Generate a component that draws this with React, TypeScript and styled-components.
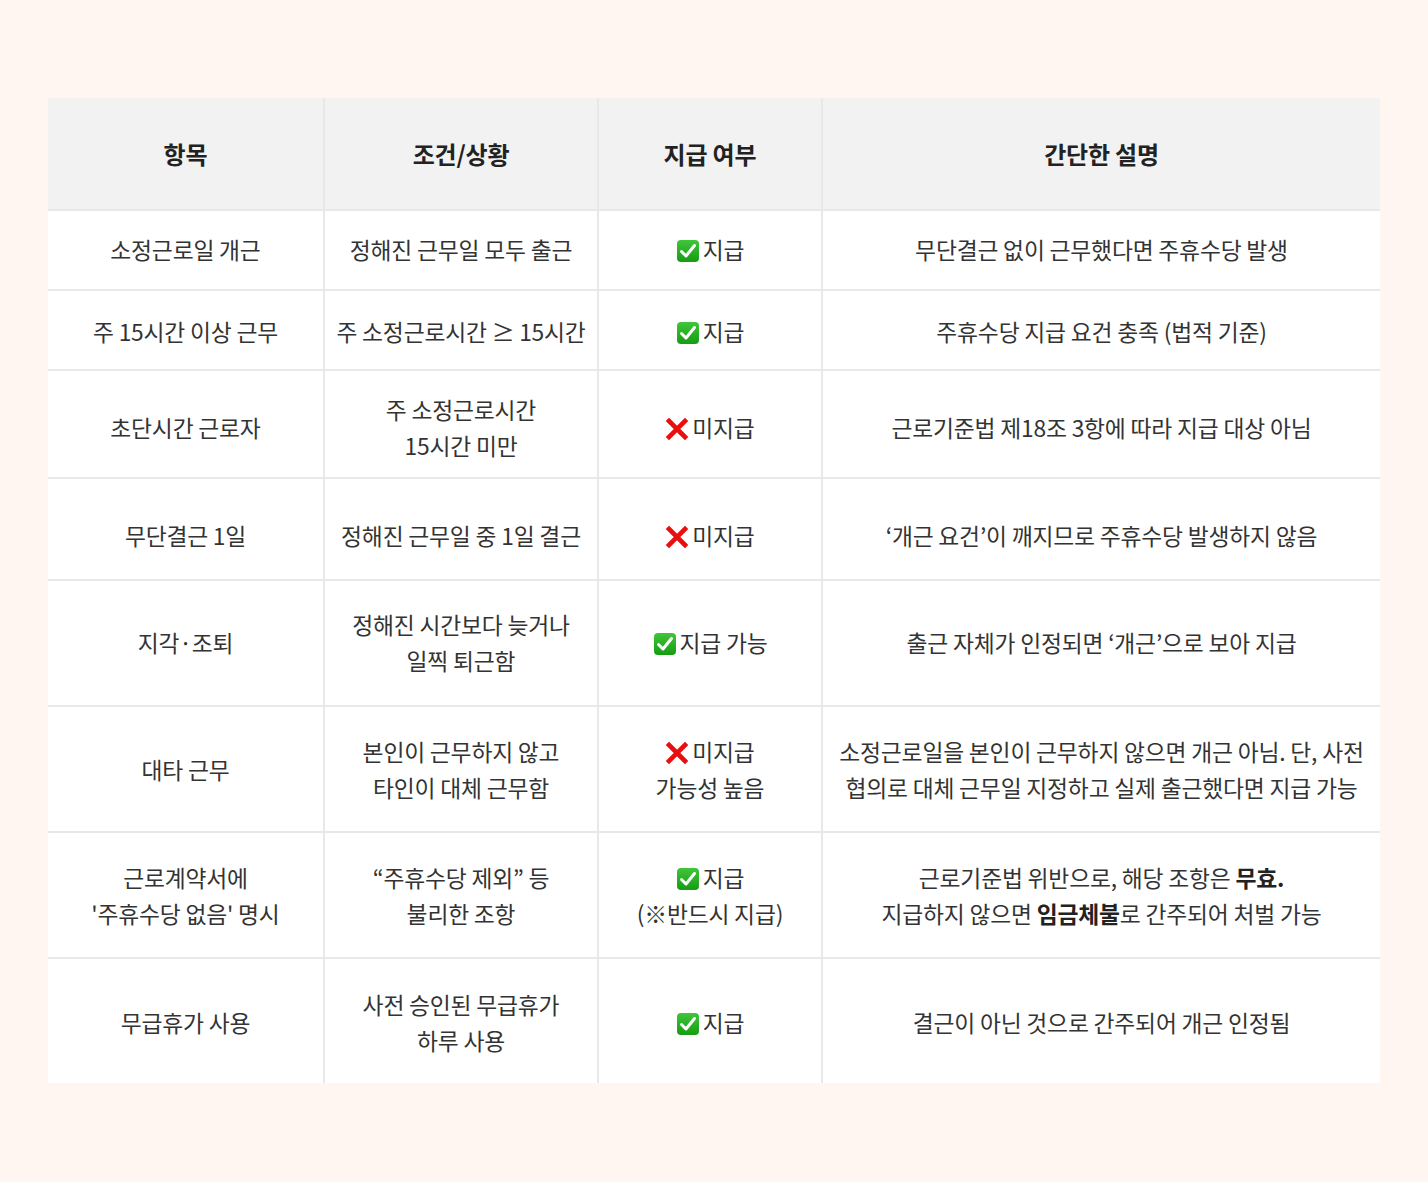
import React from "react";
import styled, { createGlobalStyle } from "styled-components";

const Global = createGlobalStyle`
  html, body {
    margin: 0;
    padding: 0;
    background: #fff6f1;
  }
  body {
    font-family: "Noto Sans CJK KR", "Noto Sans", sans-serif;
    color: #333;
  }
`;

const Page = styled.div`
  width: 1428px;
  height: 1182px;
  padding: 98px 48px 0;
  box-sizing: border-box;
`;

const Table = styled.div`
  width: 1332px;
  background: #fff;
`;

const Row = styled.div<{ $h: number; $head?: boolean }>`
  display: grid;
  grid-template-columns: 277px 274px 224px 557px;
  height: ${(p) => p.$h}px;
  background: ${(p) => (p.$head ? "#f2f2f2" : "#fff")};
  border-bottom: 2px solid #e8e8e8;
  box-sizing: border-box;
  &:last-child {
    border-bottom: none;
  }
`;

const Cell = styled.div<{ $head?: boolean; $shift?: number }>`
  display: flex;
  align-items: center;
  justify-content: center;
  text-align: center;
  font-size: ${(p) => (p.$head ? "24px" : "22.8px")};
  font-weight: ${(p) => (p.$head ? 700 : 400)};
  line-height: 36px;
  letter-spacing: -0.2px;
  color: ${(p) => (p.$head ? "#222" : "#333")};
  border-right: 2px solid #e8e8e8;
  box-sizing: border-box;
  padding: ${(p) => (p.$shift || 0) * 2}px 6px 0;
  white-space: nowrap;
  &:last-child {
    border-right: none;
  }
  b {
    font-weight: 700;
    color: #222;
  }
`;

const Icon = styled.svg`
  width: 24px;
  height: 24px;
  vertical-align: -4px;
  margin-right: 3px;
`;

const Check = () => (
  <Icon viewBox="0 0 24 24">
    <defs>
      <linearGradient id="g" x1="0" y1="0" x2="0" y2="1">
        <stop offset="0" stopColor="#3fc63a" />
        <stop offset="1" stopColor="#169c12" />
      </linearGradient>
    </defs>
    <rect x="1" y="1" width="22" height="22" rx="4" fill="url(#g)" />
    <path d="M5.5 12.5 L10 17 L18.5 6.5" fill="none" stroke="#fff" strokeWidth="3" strokeLinecap="round" strokeLinejoin="round" />
  </Icon>
);

const Cross = () => (
  <Icon viewBox="0 0 24 24">
    <path d="M4 4 L20 20 M20 4 L4 20" stroke="#e8100e" strokeWidth="4.6" strokeLinecap="square" />
  </Icon>
);

type RowData = { h: number; s?: number; c: React.ReactNode[] };

const rows: RowData[] = [
  { h: 80, c: ["소정근로일 개근", "정해진 근무일 모두 출근", <><Check />지급</>, "무단결근 없이 근무했다면 주휴수당 발생"] },
  { h: 80, s: 2, c: ["주 15시간 이상 근무", "주 소정근로시간 ≥ 15시간", <><Check />지급</>, "주휴수당 지급 요건 충족 (법적 기준)"] },
  { h: 108, s: 4, c: ["초단시간 근로자", <>주 소정근로시간<br />15시간 미만</>, <><Cross />미지급</>, "근로기준법 제18조 3항에 따라 지급 대상 아님"] },
  { h: 102, s: 7, c: ["무단결근 1일", "정해진 근무일 중 1일 결근", <><Cross />미지급</>, "‘개근 요건’이 깨지므로 주휴수당 발생하지 않음"] },
  { h: 126, c: ["지각·조퇴", <>정해진 시간보다 늦거나<br />일찍 퇴근함</>, <><Check />지급 가능</>, "출근 자체가 인정되면 ‘개근’으로 보아 지급"] },
  { h: 126, s: 1, c: ["대타 근무", <>본인이 근무하지 않고<br />타인이 대체 근무함</>, <><span><Cross />미지급</span><br />가능성 높음</>, <>소정근로일을 본인이 근무하지 않으면 개근 아님. 단, 사전<br />협의로 대체 근무일 지정하고 실제 출근했다면 지급 가능</>] },
  { h: 126, s: 1, c: [<>근로계약서에<br />'주휴수당 없음' 명시</>, <>“주휴수당 제외” 등<br />불리한 조항</>, <><span><Check />지급</span><br />(※반드시 지급)</>, <>근로기준법 위반으로, 해당 조항은 <b>무효.</b><br />지급하지 않으면 <b>임금체불</b>로 간주되어 처벌 가능</>] },
  { h: 124, s: 2, c: ["무급휴가 사용", <>사전 승인된 무급휴가<br />하루 사용</>, <><Check />지급</>, "결근이 아닌 것으로 간주되어 개근 인정됨"] },
];

const Inner = styled.div`
  display: block;
`;

export default function App() {
  return (
    <Page>
      <Global />
      <Table>
        <Row $h={113} $head>
          {["항목", "조건/상황", "지급 여부", "간단한 설명"].map((t) => (
            <Cell key={t} $head>{t}</Cell>
          ))}
        </Row>
        {rows.map((r, i) => (
          <Row key={i} $h={r.h}>
            {r.c.map((c, j) => (
              <Cell key={j} $shift={r.s}>
                <Inner>{c}</Inner>
              </Cell>
            ))}
          </Row>
        ))}
      </Table>
    </Page>
  );
}
